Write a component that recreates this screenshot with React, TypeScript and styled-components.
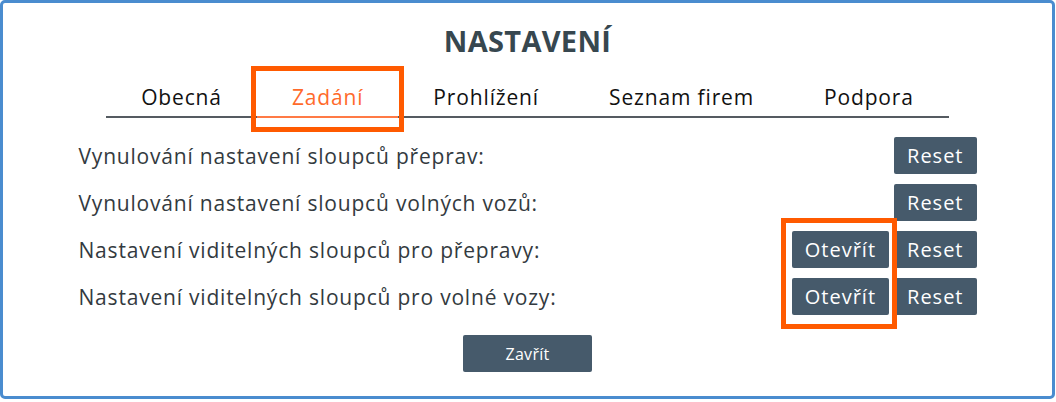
import React from "react";
import styled, { createGlobalStyle } from "styled-components";

const Global = createGlobalStyle`
  html, body { margin: 0; padding: 0; background: #ffffff; }
  body { font-family: "Open Sans", "Liberation Sans", sans-serif; }
  * { box-sizing: border-box; }
`;

const Modal = styled.div`
  position: relative;
  width: 1055px;
  height: 399px;
  border: 3px solid #4a8ccf;
  border-radius: 5px;
  background: #ffffff;
  display: flex;
  flex-direction: column;
  align-items: center;
`;

const Title = styled.h1`
  margin: 19px 0 0 0;
  height: 38px;
  line-height: 38px;
  font-size: 29px;
  font-weight: 700;
  color: #37474f;
  letter-spacing: 0.3px;
`;

const TabBar = styled.div`
  display: flex;
  margin-top: 20px;
  border-bottom: 2px solid #555b61;
`;

const Tab = styled.div<{ $active?: boolean }>`
  padding: 0 35px;
  height: 38px;
  line-height: 35px;
  font-size: 21px;
  font-weight: 500;
  letter-spacing: 0.85px;
  color: ${(p) => (p.$active ? "#ff6a2b" : "#111111")};
  border-bottom: 2px solid ${(p) => (p.$active ? "#ff7a45" : "transparent")};
  margin-bottom: -2px;
`;

const Rows = styled.div`
  width: 898px;
  margin-top: 19px;
  display: flex;
  flex-direction: column;
  gap: 10px;
`;

const Row = styled.div`
  display: flex;
  align-items: center;
  justify-content: space-between;
  height: 37px;
`;

const Label = styled.span`
  font-size: 21px;
  letter-spacing: 0.8px;
  color: #333a40;
`;

const Actions = styled.div`
  display: flex;
  gap: 5px;
`;

const Button = styled.button`
  height: 37px;
  padding: 0 13px;
  border: none;
  border-radius: 2px;
  background: #465a6b;
  color: #ffffff;
  font-family: "Open Sans", "Liberation Sans", sans-serif;
  font-size: 20px;
  letter-spacing: 1px;
  font-weight: 500;
  cursor: pointer;
`;

const CloseButton = styled(Button)`
  width: 129px;
  font-size: 16px;
  letter-spacing: 0.3px;
  margin-top: 20px;
`;

const Highlight = styled.div`
  position: absolute;
  border: 5px solid #ff5a00;
  pointer-events: none;
`;

const rows = [
  { label: "Vynulování nastavení sloupců přeprav:", open: false },
  { label: "Vynulování nastavení sloupců volných vozů:", open: false },
  { label: "Nastavení viditelných sloupců pro přepravy:", open: true },
  { label: "Nastavení viditelných sloupců pro volné vozy:", open: true },
];

const tabs = ["Obecná", "Zadání", "Prohlížení", "Seznam firem", "Podpora"];

export default function App() {
  return (
    <>
      <Global />
      <Modal>
        <Title>NASTAVENÍ</Title>
        <TabBar>
          {tabs.map((t) => (
            <Tab key={t} $active={t === "Zadání"}>
              {t}
            </Tab>
          ))}
        </TabBar>
        <Rows>
          {rows.map((r) => (
            <Row key={r.label}>
              <Label>{r.label}</Label>
              <Actions>
                {r.open && <Button>Otevřít</Button>}
                <Button>Reset</Button>
              </Actions>
            </Row>
          ))}
        </Rows>
        <CloseButton>Zavřít</CloseButton>
        <Highlight style={{ left: 248, top: 63, width: 153, height: 66 }} />
        <Highlight style={{ left: 778, top: 215, width: 116, height: 111 }} />
      </Modal>
    </>
  );
}
